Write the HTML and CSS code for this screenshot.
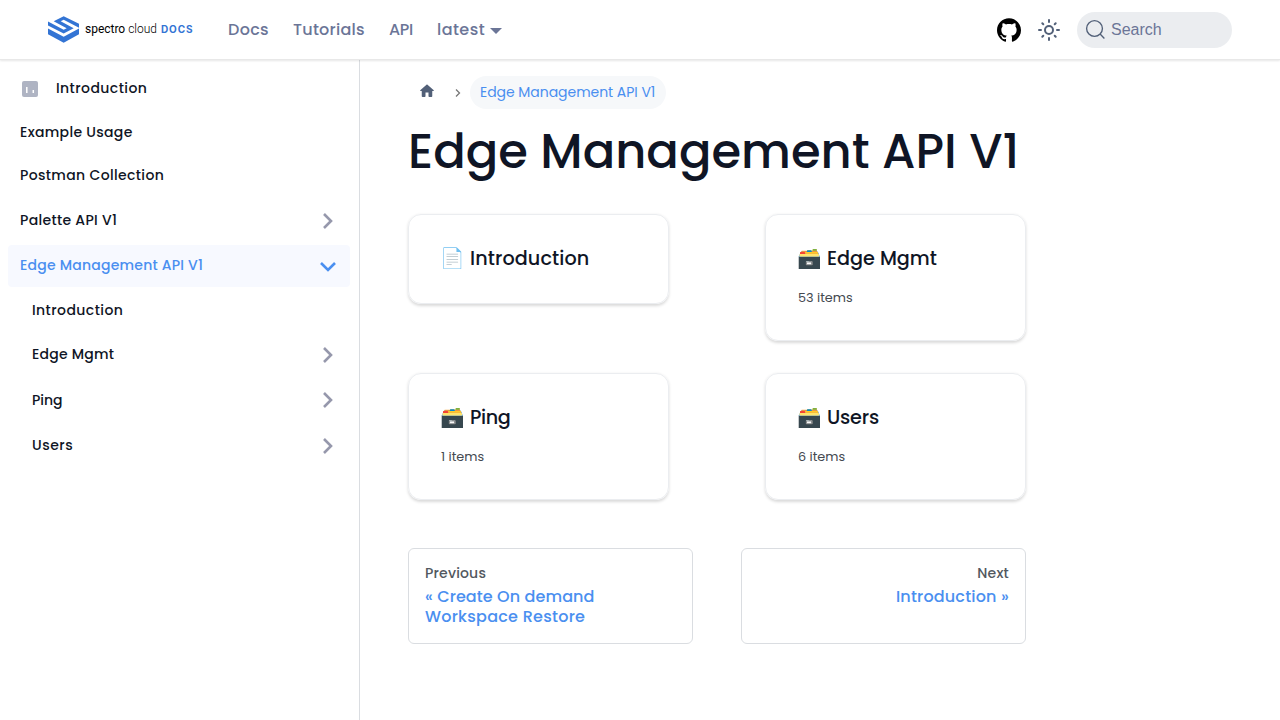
FILE: index.html
```html
<!DOCTYPE html>
<html lang="en">
<head>
<meta charset="utf-8">
<title>Edge Management API V1 | Spectro Cloud Docs</title>
<link rel="stylesheet" href="styles.css">
</head>
<body>
<header class="navbar">
  <a class="brand">
    <svg class="brand-mark" viewBox="0 0 93 80"><g fill="#3374d4"><path d="M0 16 47 41 56 36 17 15 47 0 93 23V35L47 11 38 15 77 36 47 52 0 28z"/><path d="M0 37 47 62 93 37V54L47 80 0 54z"/></g></svg>
    <span class="brand-name">spectro <span class="brand-light">cloud</span></span>
    <span class="brand-docs">DOCS</span>
  </a>
  <nav class="nav-links">
    <a class="nl-docs">Docs</a><a class="nl-tut">Tutorials</a><a class="nl-api">API</a><a class="nl-latest">latest<i class="drop"></i></a>
  </nav>
  <div class="nav-tools">
    <svg class="github" viewBox="0 0 24 24"><path d="M12 .297c-6.63 0-12 5.373-12 12 0 5.303 3.438 9.8 8.205 11.385.6.113.82-.258.82-.577 0-.285-.01-1.04-.015-2.04-3.338.724-4.042-1.61-4.042-1.61C4.422 18.07 3.633 17.7 3.633 17.7c-1.087-.744.084-.729.084-.729 1.205.084 1.838 1.236 1.838 1.236 1.07 1.835 2.809 1.305 3.495.998.108-.776.417-1.305.76-1.605-2.665-.3-5.466-1.332-5.466-5.93 0-1.31.465-2.38 1.235-3.22-.135-.303-.54-1.523.105-3.176 0 0 1.005-.322 3.3 1.23.96-.267 1.98-.399 3-.405 1.02.006 2.04.138 3 .405 2.28-1.552 3.285-1.23 3.285-1.23.645 1.653.24 2.873.12 3.176.765.84 1.23 1.91 1.23 3.22 0 4.61-2.805 5.625-5.475 5.92.42.36.81 1.096.81 2.22 0 1.606-.015 2.896-.015 3.286 0 .315.21.69.825.57C20.565 22.092 24 17.592 24 12.297c0-6.627-5.373-12-12-12"/></svg>
    <svg class="sun" viewBox="0 0 24 24"><g fill="none" stroke="#526078" stroke-width="2" stroke-linecap="round"><circle cx="12" cy="12" r="4"/><path d="M12 2v2M12 20v2M2 12h2M20 12h2M5.3 5.3l1 1M17.7 17.7l1 1M18.7 5.3l-1 1M6.3 17.7l-1 1"/></g></svg>
    <div class="search"><svg viewBox="0 0 20 20"><path d="M14.386 14.386l4.0877 4.0877-4.0877-4.0877c-2.9418 2.9419-7.7115 2.9419-10.6533 0-2.9419-2.9418-2.9419-7.7115 0-10.6533 2.9418-2.9419 7.7115-2.9419 10.6533 0 2.9419 2.9418 2.9419 7.7115 0 10.6533z" fill="none" stroke="#526078" stroke-width="1.3" stroke-linecap="round"/></svg><span>Search</span></div>
  </div>
</header>
<div class="layout">
  <aside class="sidebar">
    <a class="item"><svg class="item-icon" viewBox="0 0 16 16"><rect width="16" height="16" rx="2" fill="#afb4c3"/><path stroke="#fff" stroke-width="1.5" d="M4.8 6v6M11.3 9v3"/></svg><span class="w-intro">Introduction</span></a>
    <a class="item"><span class="w-example">Example Usage</span></a>
    <a class="item"><span class="w-postman">Postman Collection</span></a>
    <a class="item category"><span class="w-palette">Palette API V1</span><svg class="chev" viewBox="0 0 20 20"><path d="M6 3l7 7-7 7"/></svg></a>
    <a class="item category active"><span class="w-edge">Edge Management API V1</span><svg class="chev" viewBox="0 0 20 20"><path d="M3 7l7 7 7-7"/></svg></a>
    <div class="children">
      <a class="item"><span class="w-intro">Introduction</span></a>
      <a class="item category"><span class="w-mgmt">Edge Mgmt</span><svg class="chev" viewBox="0 0 20 20"><path d="M6 3l7 7-7 7"/></svg></a>
      <a class="item category"><span class="w-ping">Ping</span><svg class="chev" viewBox="0 0 20 20"><path d="M6 3l7 7-7 7"/></svg></a>
      <a class="item category"><span class="w-users">Users</span><svg class="chev" viewBox="0 0 20 20"><path d="M6 3l7 7-7 7"/></svg></a>
    </div>
  </aside>
  <main class="content">
    <nav class="crumbs">
      <svg class="home" viewBox="0 0 24 24"><path d="M10 19v-5h4v5c0 .55.45 1 1 1h3c.55 0 1-.45 1-1v-7h1.7c.46 0 .68-.57.33-.87L12.67 3.6c-.38-.34-.96-.34-1.34 0l-8.36 7.53c-.34.3-.13.87.33.87H5v7c0 .55.45 1 1 1h3c.55 0 1-.45 1-1z"/></svg>
      <svg class="sep" viewBox="0 0 10 10"><path d="M3 1.5 6.5 5 3 8.5"/></svg>
      <span class="pill">Edge Management API V1</span>
    </nav>
    <h1 class="title">Edge Management API V1</h1>
    <section class="cards">
      <a class="card"><h2><span class="emoji">📄</span><span class="c-intro">Introduction</span></h2></a>
      <a class="card"><h2><span class="emoji">🗃️</span><span class="c-mgmt">Edge Mgmt</span></h2><p>53 items</p></a>
      <a class="card"><h2><span class="emoji">🗃️</span><span class="c-ping">Ping</span></h2><p>1 items</p></a>
      <a class="card"><h2><span class="emoji">🗃️</span><span class="c-users">Users</span></h2><p>6 items</p></a>
    </section>
    <nav class="pager">
      <a class="page"><span class="sub">Previous</span><span class="label label-first">« Create On demand</span><span class="label">Workspace Restore</span></a>
      <a class="page next"><span class="sub">Next</span><span class="label label-next">Introduction »</span></a>
    </nav>
  </main>
</div>
</body>
</html>
```

FILE: styles.css
```css
* { box-sizing: border-box; }
body { margin: 0; height: 720px; overflow: hidden; background: #fff; color: #0f1525; font-family: Poppins, Inter, sans-serif; font-weight: 500; }
h1, h2, p { margin: 0; }
svg { display: block; flex: none; }
.navbar { height: 60px; padding: 0 48px; display: flex; align-items: center; position: relative; z-index: 1; background: #fff; box-shadow: 0 1px 2px rgba(0,0,0,.1); border-bottom: 1px solid #e8e8e8; }
.brand { width: 180px; display: flex; align-items: center; }
.brand-mark { width: 31px; height: 27px; }
.brand-name { margin: -2px 0 0 6px; width: 76px; font: 400 12px/20px Roboto, sans-serif; letter-spacing: -.02px; color: #000; white-space: nowrap; }
.brand-light { font-weight: 300; }
.brand-docs { margin-top: -2px; color: #3374d4; font: 700 10px/20px Inter, sans-serif; letter-spacing: .9px; }
.nav-links { display: flex; gap: 24px; color: #6b7597; font-size: 16px; line-height: 24px; }
.nav-links a { white-space: nowrap; }
.nl-docs { width: 41px; letter-spacing: .3px; }
.nl-tut { width: 72px; letter-spacing: .25px; }
.nl-api { width: 24px; letter-spacing: -.3px; }
.nl-latest { letter-spacing: .45px; }
.drop { display: inline-block; margin-left: 5px; border: 6.4px solid transparent; border-top-color: #6b7597; border-bottom: 0; vertical-align: 1px; }
.nav-tools { margin-left: auto; display: flex; align-items: center; }
.github { width: 24px; height: 24px; margin-right: 16px; }
.sun { width: 24px; height: 24px; margin-right: 16px; }
.search { width: 155px; height: 36px; border-radius: 18px; background: #ebedf0; display: flex; align-items: center; padding-left: 8px; gap: 5px; color: #6b7597; font: 400 16px/20px "Liberation Sans", sans-serif; }
.search svg { width: 21px; height: 21px; }
.layout { display: flex; height: 660px; }
.sidebar { width: 360px; border-right: 1px solid #dadde1; padding: 8.8px 9px 0 8px; font-size: 14px; }
.item { display: flex; align-items: center; height: 40px; margin-bottom: 3.6px; padding: 0 12px; border-radius: 4px; line-height: 18px; white-space: nowrap; }
.item > span { margin-top: -2px; }
.category { height: 42px; margin-bottom: 3.4px; justify-content: space-between; }
.children { padding-left: 12px; }
.children .w-intro, .children .w-ping, .item > .w-example { margin-top: -1px; }
.w-intro { letter-spacing: .42px; }
.w-example, .w-palette { letter-spacing: .31px; }
.w-postman { letter-spacing: .35px; }
.w-edge, .w-mgmt { letter-spacing: .22px; }
.w-users { letter-spacing: .5px; }
.item-icon { width: 16px; height: 16px; margin: 0 18px 0 2px; }
.chev { width: 20px; height: 20px; fill: none; stroke: #9698ac; stroke-width: 2.6; }
.active { background: #f7f9ff; color: #4a8ff0; }
.active .chev { stroke: #4a8ff0; }
.content { width: 666px; padding: 16px 0 0 48px; }
.crumbs { display: flex; align-items: center; height: 33px; }
.home { width: 18px; height: 18px; margin: -3px 0 0 10px; fill: #526078; }
.sep { width: 10px; height: 10px; margin: 1px 7px 0 17px; fill: none; stroke: #777; stroke-width: 1.3; }
.pill { width: 196px; height: 33px; border-radius: 17px; background: #f6f8fa; padding: 0 10px; font-size: 14px; font-weight: 400; line-height: 32px; letter-spacing: -.04px; color: #4a8ff0; white-space: nowrap; }
.title { height: 105px; padding-top: 13px; font-size: 48px; line-height: 60px; font-weight: 500; white-space: nowrap; }
.cards { display: grid; grid-template-columns: 261px 261px; gap: 32px 96px; align-items: start; }
.card { border: 1px solid #ebedf0; border-radius: 13px; padding: 32px 32px 0; height: 127px; box-shadow: 0 1.5px 3px rgba(0,0,0,.15); }
.card:first-child { height: 90px; }
.card h2 { display: flex; font-size: 19.2px; line-height: 24px; font-weight: 500; white-space: nowrap; }
.emoji { width: 29px; margin: -1px 1px 0 -1px; font-size: 19.8px; }
.c-intro { letter-spacing: .1px; }
.c-ping { letter-spacing: -.4px; }
.c-users { letter-spacing: -.2px; }
.card p { margin-top: 17px; font-size: 12.8px; line-height: 20px; font-weight: 400; color: #444950; }
.pager { display: grid; grid-template-columns: 285px 285px; gap: 48px; margin-top: 48px; }
.page { height: 96px; border: 1px solid #dadde1; border-radius: 6px; padding: 15px 16px; display: flex; flex-direction: column; line-height: 20px; white-space: nowrap; }
.next { text-align: right; }
.sub { font-size: 14px; height: 23px; line-height: 18px; letter-spacing: .18px; color: #525860; }
.label { color: #4a8ff0; font-size: 16px; letter-spacing: .26px; }
.label-first { letter-spacing: .1px; }
.label-next { letter-spacing: .18px; }
```
